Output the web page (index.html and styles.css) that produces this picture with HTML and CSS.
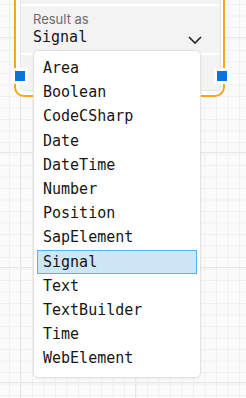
FILE: index.html
```html
<!DOCTYPE html>
<html lang="en">
  <head>
    <meta charset="UTF-8" />
    <meta name="viewport" content="width=device-width, initial-scale=1.0" />
    <title>Result as</title>
    <link rel="stylesheet" href="styles.css">
  </head>
  <body>
    <div class="canvas">
      <div class="node">
        <div class="panel">
          <div class="row row-top"></div>
          <div class="row field">
            <div class="field-label">Result as</div>
            <div class="field-value">
              <span>Signal</span>
              <svg class="chevron" width="14" height="8" viewBox="0 0 14 8">
                <polyline points="1,1 7,7 13,1" fill="none" stroke="#222" stroke-width="1.6" />
              </svg>
            </div>
            <ul class="dropdown">
              <li>Area</li>
              <li>Boolean</li>
              <li>CodeCSharp</li>
              <li>Date</li>
              <li>DateTime</li>
              <li>Number</li>
              <li>Position</li>
              <li>SapElement</li>
              <li class="selected">Signal</li>
              <li>Text</li>
              <li>TextBuilder</li>
              <li>Time</li>
              <li>WebElement</li>
            </ul>
          </div>
          <div class="row row-bottom"></div>
        </div>
        <span class="handle handle-left"></span>
        <span class="handle handle-right"></span>
      </div>
    </div>
  </body>
</html>
```

FILE: styles.css
```css
      html, body {
        margin: 0;
        height: 100%;
      }
      body {
        font-family: "DejaVu Sans Mono", monospace;
        color: #1a1a1a;
        background-color: #fbfbfb;
        background-image:
          linear-gradient(to right, #e7e7e7 1px, transparent 1px),
          linear-gradient(to bottom, #e7e7e7 1px, transparent 1px),
          linear-gradient(to right, #f0f0f0 1px, transparent 1px),
          linear-gradient(to bottom, #f0f0f0 1px, transparent 1px);
        background-size: 115px 115px, 115px 115px, 11.5px 11.5px, 11.5px 11.5px;
        background-position: 20px 37px, 20px 37px, 9px 4px, 9px 4px;
        overflow: hidden;
      }
      .canvas {
        padding-left: 14px;
      }
      .node {
        position: relative;
        width: 201px;
        margin-top: -30px;
        padding: 4px 2px 4px 4px;
        background: #ffffff;
        border: 2px solid #f8a51c;
        border-radius: 10px;
      }
      .panel {
        display: flex;
        flex-direction: column;
        gap: 2px;
        background: #ffffff;
        border: 1px solid #e4e4e4;
        border-radius: 4px;
      }
      .row {
        background: #f3f3f3;
      }
      .row-top {
        height: 27px;
        border-radius: 3px 3px 0 0;
      }
      .row-bottom {
        height: 35px;
        border-radius: 0 0 3px 3px;
      }
      .field {
        position: relative;
        padding: 6px 12px 6px 12px;
      }
      .field-label {
        font-family: Inter, "Noto Sans", sans-serif;
        font-size: 13px;
        line-height: 15px;
        color: #6b6b6b;
      }
      .field-value {
        display: flex;
        justify-content: space-between;
        align-items: center;
        font-size: 15px;
        line-height: 20px;
        color: #161616;
      }
      .chevron {
        margin-right: 6px;
        margin-top: 5px;
      }
      .dropdown {
        position: absolute;
        top: 44px;
        left: 12px;
        z-index: 2;
        width: 160px;
        margin: 0;
        padding: 5px 3px 6px 3px;
        list-style: none;
        background: #ffffff;
        border: 1px solid #e2e2e2;
        border-radius: 5px;
        box-shadow: 0 1px 3px rgba(0, 0, 0, 0.06);
      }
      .dropdown li {
        font-size: 15px;
        line-height: 22.2px;
        padding: 0 5px;
        border: 1px solid transparent;
        color: #161616;
        white-space: nowrap;
      }
      .dropdown li.selected {
        background: #cde7f6;
        border-color: #5eb0e8;
      }
      .handle {
        position: absolute;
        width: 10px;
        height: 10px;
        background: #0a74da;
        border: 3px solid #ffffff;
      }
      .handle-left {
        left: -4px;
        bottom: 11px;
      }
      .handle-right {
        right: -7px;
        bottom: 11px;
      }
```
